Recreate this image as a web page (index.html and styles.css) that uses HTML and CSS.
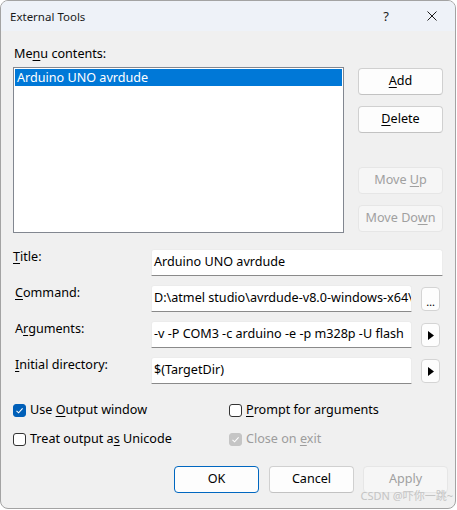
FILE: index.html
```html
<!DOCTYPE html>
<html>
<head>
<meta charset="utf-8">
<link rel="stylesheet" href="styles.css">
</head>
<body>
<div class="window">
  <div class="titlebar">
    <span class="title">External Tools</span>
    <span class="help">?</span>
    <span class="close"><svg width="10" height="10" viewBox="0 0 10 10"><path d="M0.5 0.5 L9.5 9.5 M9.5 0.5 L0.5 9.5" stroke="#1a1a1a" stroke-width="1"/></svg></span>
  </div>
  <div class="content">
    <div class="menu-label">Me<u>n</u>u contents:</div>
    <div class="menu-row">
      <div class="listbox">
        <div class="item selected">Arduino UNO avrdude</div>
      </div>
      <div class="side-buttons">
        <div class="btn"><span><u>A</u>dd</span></div>
        <div class="btn gap-s"><span><u>D</u>elete</span></div>
        <div class="btn disabled gap-l"><span>Move <u>U</u>p</span></div>
        <div class="btn disabled gap-s"><span>Move Do<u>w</u>n</span></div>
      </div>
    </div>
    <div class="form">
      <div class="label first"><u>T</u>itle:</div>
      <div class="field-cell"><div class="field">Arduino UNO avrdude</div></div>
      <div class="label"><u>C</u>ommand:</div>
      <div class="field-cell"><div class="field short">D:\atmel studio\avrdude-v8.0-windows-x64\</div><div class="mini">…</div></div>
      <div class="label">A<u>r</u>guments:</div>
      <div class="field-cell"><div class="field short">-v -P COM3 -c arduino -e -p m328p -U flash</div><div class="mini"><svg width="6" height="9" viewBox="0 0 6 9"><path d="M0 0 L6 4.5 L0 9 Z" fill="#000"/></svg></div></div>
      <div class="label"><u>I</u>nitial directory:</div>
      <div class="field-cell"><div class="field short">$(TargetDir)</div><div class="mini"><svg width="6" height="9" viewBox="0 0 6 9"><path d="M0 0 L6 4.5 L0 9 Z" fill="#000"/></svg></div></div>
    </div>
    <div class="checks">
      <div class="check"><span class="box on"><svg width="9" height="9" viewBox="0 0 9 9"><path d="M1.5 4.8 L3.6 6.8 L7.6 2.4" fill="none" stroke="#fff" stroke-width="1.1"/></svg></span><span>Use <u>O</u>utput window</span></div>
      <div class="check"><span class="box"></span><span><u>P</u>rompt for arguments</span></div>
      <div class="check"><span class="box"></span><span>Treat output a<u>s</u> Unicode</span></div>
      <div class="check dis"><span class="box grey"><svg width="9" height="9" viewBox="0 0 9 9"><path d="M1.5 4.8 L3.6 6.8 L7.6 2.4" fill="none" stroke="#fff" stroke-width="1.1"/></svg></span><span>Close on <u>e</u>xit</span></div>
    </div>
    <div class="footer">
      <div class="btn primary">OK</div>
      <div class="btn">Cancel</div>
      <div class="btn disabled">Apply</div>
    </div>
  </div>
  <div class="watermark">CSDN @吓你一跳~</div>
</div>
</body>
</html>
```

FILE: styles.css
```css
* { box-sizing: border-box; }
html, body { margin: 0; padding: 0; background: #ffffff; }
body { font-family: "Noto Sans", "Noto Sans CJK SC", sans-serif; font-size: 12.6px; color: #000; }
u { text-decoration: underline; text-underline-offset: 2px; text-decoration-thickness: 1px; }

.window {
  position: relative;
  width: 456px;
  height: 509px;
  border: 1px solid #a3a3a3;
  border-radius: 8px;
  overflow: hidden;
  background: #f0f0f0;
  display: flex;
  flex-direction: column;
}

.titlebar {
  height: 30px;
  background: #eef2f8;
  display: flex;
  align-items: center;
  padding-left: 9px;
  flex-shrink: 0;
}
.title { font-size: 11.5px; flex: 1; color: #1a1a1a; }
.help { font-size: 13px; width: 46px; text-align: center; color: #1a1a1a; margin-left: 1px; }
.close { width: 46px; display: flex; justify-content: center; align-items: center; }

.content { padding: 15px 12px 0 12px; flex: 1; }

.menu-label { line-height: 16px; padding-left: 1px; }

.menu-row { display: flex; margin-top: 5px; }
.listbox {
  width: 331px;
  height: 166px;
  border: 1px solid #828790;
  background: #fff;
  padding: 1px;
}
.item { height: 17px; line-height: 17px; padding-left: 2px; }
.item.selected { background: #0078d7; color: #fff; }

.side-buttons { margin-left: 14px; width: 85px; display: flex; flex-direction: column; padding-top: 1px; }

.btn {
  height: 27px;
  width: 85px;
  border: 1px solid #d0d0d0;
  border-bottom-color: #c2c2c2;
  border-radius: 4px;
  background: #fdfdfd;
  display: flex;
  align-items: center;
  justify-content: center;
  line-height: 16px;
  white-space: nowrap;
  padding-bottom: 1px;
}
.btn.gap-s { margin-top: 11px; }
.btn.gap-l { margin-top: 34px; }
.btn.disabled { background: #f6f6f6; border-color: #e6e6e6; color: #a0a0a0; }
.btn.primary { border-color: #0067c0; }

.form {
  display: grid;
  grid-template-columns: 138px 1fr;
  row-gap: 9px;
  margin-top: 16px;
}
.label { line-height: 16px; padding-left: 2px; padding-top: 0; }
.label.first { padding-left: 0; }
.field-cell { display: flex; align-items: center; }
.field {
  width: 292px;
  height: 27px;
  background: #fff;
  border: 1px solid #ececec;
  border-bottom: 1px solid #8a8a8a;
  border-radius: 3px 3px 0 0;
  padding: 4px 2px 0 2px;
  line-height: 16px;
  white-space: nowrap;
  overflow: hidden;
}
.field.short { width: 261px; }
.mini {
  width: 19px;
  height: 24px;
  margin-left: 9px;
  border: 1px solid #d4d4d4;
  border-radius: 4px;
  background: #fdfdfd;
  display: flex;
  align-items: center;
  justify-content: center;
  font-size: 11px;
  padding-top: 5px;
}
.mini svg { margin-top: -4px; }

.checks {
  display: grid;
  grid-template-columns: 216px 1fr;
  row-gap: 11px;
  margin-top: 17px;
}
.check { display: flex; align-items: center; height: 18px; line-height: 16px; }
.box {
  width: 13px;
  height: 13px;
  border: 1px solid #333;
  border-radius: 3px;
  background: #fff;
  margin-right: 4px;
  display: flex;
  align-items: center;
  justify-content: center;
  flex-shrink: 0;
}
.box.on { background: #005fb8; border-color: #005fb8; }
.box.grey { background: #c5c5c5; border-color: #c5c5c5; }
.check.dis { color: #9d9d9d; }

.footer {
  display: flex;
  justify-content: flex-end;
  gap: 10px;
  margin-top: 18px;
  margin-right: -5px;
}
.footer .btn.disabled { margin-left: -1px; }

.watermark {
  position: absolute;
  right: 2px;
  bottom: 5px;
  font-size: 11px;
  color: #c4c4c4;
}
```
